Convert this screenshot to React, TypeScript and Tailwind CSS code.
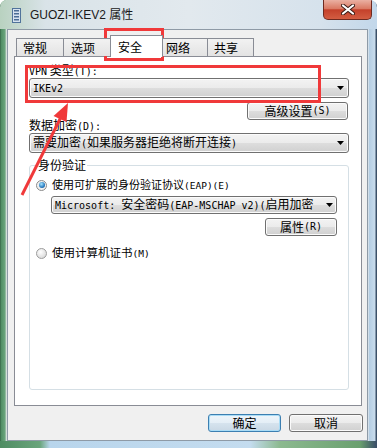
import React from "react";

const M = ({ children, small }: { children: React.ReactNode; small?: boolean }) => (
    <span className={`font-['DejaVu_Sans_Mono',monospace] ${small ? "text-[9.5px]" : "text-[10px]"}`}>{children}</span>
);

const DownArrow = ({ className = "" }: { className?: string }) => (
    <svg width="7" height="4" viewBox="0 0 7 4" className={className}>
        <polygon points="0,0 7,0 3.5,4" fill="#000" />
    </svg>
);

const grad =
    "bg-[linear-gradient(to_bottom,#f3f3f3_0%,#ebebeb_50%,#dddddd_51%,#d0d0d0_100%)] shadow-[inset_0_0_0_1px_#fbfbfb]";

function Combo({ className, children, arrowMr }: { className: string; children: React.ReactNode; arrowMr: string }) {
    return (
        <div className={`flex items-center rounded-[3px] border border-[#707070] ${grad} ${className}`}>
            <div className="flex-1 min-w-0 overflow-hidden whitespace-nowrap pl-[3px] leading-[16px]">{children}</div>
            <DownArrow className={`shrink-0 ${arrowMr}`} />
        </div>
    );
}

function Button({ className, children, primary }: { className: string; children: React.ReactNode; primary?: boolean }) {
    return (
        <div
            className={`flex items-center justify-center rounded-[3px] border leading-[14px] ${primary
                ? "border-[#3c7fb1] bg-[linear-gradient(to_bottom,#eef5fa_0%,#e4eef6_50%,#d6e3ee_51%,#c9d8e5_100%)] shadow-[inset_0_0_0_1px_#a9dcf6]"
                : `border-[#707070] ${grad}`
                } ${className}`}
        >
            {children}
        </div>
    );
}

function Radio({ checked }: { checked?: boolean }) {
    return checked ? (
        <div className="w-[11px] h-[11px] rounded-full border border-[#8a8a8a] bg-[radial-gradient(circle,#e4e4e4,#fafafa)] flex items-center justify-center">
            <div className="w-[6px] h-[6px] rounded-full bg-[radial-gradient(circle_at_40%_35%,#a6e4ff,#2a7cc0_60%,#0d4480)]" />
        </div>
    ) : (
        <div className="w-[11px] h-[11px] rounded-full border border-[#9c9c9c] bg-[radial-gradient(circle_at_40%_35%,#ffffff,#dedede_70%,#c6c6c6)]" />
    );
}

export default function App() {
    const tabs = [
        { label: "常规", w: "w-[48px]", pl: "pl-[6px]" },
        { label: "选项", w: "w-[48px] -ml-px", pl: "pl-[7px]" },
        { label: "安全", w: "w-[53px] -ml-px", pl: "pl-[7px]", active: true },
        { label: "网络", w: "w-[46px] -ml-px", pl: "pl-[3px]" },
        { label: "共享", w: "w-[47px] -ml-px", pl: "pl-[6px]" },
    ];

    return (
        <div className="w-[377px] h-[448px] relative overflow-hidden flex flex-col rounded-t-[7px] text-[12px] text-black font-['Noto_Sans_CJK_SC','Noto_Sans',sans-serif] bg-[linear-gradient(to_right,#2f5a3e_0px,#4f8d63_1px,#6aa57c_5px,#b7cfc2_6px,#f0f0f0_7px,#f0f0f0_368px,#b3cde3_369px,#c9dcec_375px,#3b5068_376px)]">

            {/* title bar */}
            <div className="h-[29px] shrink-0 flex items-start rounded-t-[7px] bg-[linear-gradient(to_right,#b9d2c0,#d9e3e8_12%,#e2e9ee_50%,#d6e2ec_85%,#c2d7ea)]">
                <svg width="9" height="15" viewBox="0 0 9 15" className="ml-[12px] mt-[8px]">
                    <rect x="0.5" y="0.5" width="8" height="14" fill="#d6e2ef" stroke="#51739b" />
                    <rect x="2" y="2" width="5" height="1.5" fill="#4a6d96" />
                    <rect x="2" y="5" width="5" height="1.5" fill="#4a6d96" />
                    <rect x="2" y="8" width="5" height="1.5" fill="#4a6d96" />
                    <rect x="2" y="11" width="5" height="1.5" fill="#4a6d96" />
                </svg>
                <span className="ml-[9px] mt-[7px] leading-[16px] font-['Liberation_Sans','Noto_Sans_CJK_SC',sans-serif] text-[12px] text-[#1a1a1a]">
                    GUOZI-IKEV2 属性
                </span>
                <div className="flex-1" />
                <div className="mr-[5px] w-[49px] h-[20px] flex items-center justify-center rounded-b-[5px] border border-t-0 border-[#6e2a20] bg-[linear-gradient(to_bottom,#eab0a2_0%,#da7a64_45%,#c4412b_52%,#d35d42_100%)]">
                    <svg width="14" height="11" viewBox="0 0 14 11">
                        <path d="M2 1.5 L12 9.5 M12 1.5 L2 9.5" stroke="#3a1a14" strokeWidth="4" strokeLinecap="round" />
                        <path d="M2 1.5 L12 9.5 M12 1.5 L2 9.5" stroke="#fff" strokeWidth="2.2" strokeLinecap="round" />
                    </svg>
                </div>
            </div>

            {/* client area */}
            <div className="ml-[7px] w-[361px] h-[412px] shrink-0 border border-[#8e9aa6] bg-[#f0f0f0] flex flex-col">

                <div className="mt-[5px] ml-[8px] flex items-end h-[22px] -mb-px relative z-10">
                    {tabs.map((t) => (
                        <div
                            key={t.label}
                            className={`${t.w} ${t.pl} flex items-center border border-b-0 border-[#898c95] leading-[14px] ${t.active
                                ? "h-[22px] bg-white relative z-10"
                                : "h-[18px] mb-px bg-[linear-gradient(to_bottom,#f2f2f2,#e3e3e3)]"
                                }`}
                        >
                            {t.label}
                        </div>
                    ))}
                </div>

                <div className="ml-[6px] w-[348px] h-[350px] border border-[#898c95] bg-white flex flex-col">
                    <div className="mt-[6px] ml-[14px] h-[14px] leading-[14px]">
                        <M>VPN</M> 类型<M>(T):</M>
                    </div>
                    <Combo className="mt-px ml-[14px] w-[320px] h-[20px]" arrowMr="mr-[4px]">
                        <M>IKEv2</M>
                    </Combo>
                    <Button className="mt-[4px] ml-[232px] w-[101px] h-[18px]">
                        高级设置<M>(S)</M>
                    </Button>
                    <div className="-mt-[2px] ml-[14px] h-[14px] leading-[14px]">
                        数据加密<M>(D):</M>
                    </div>
                    <Combo className="mt-px ml-[14px] w-[320px] h-[20px]" arrowMr="mr-[4px]">
                        需要加密<M>(</M>如果服务器拒绝将断开连接<M>)</M>
                    </Combo>

                    <div className="mt-[12px] ml-[14px] w-[320px] h-[225px] border border-[#d5dfe5] rounded-[3px] flex flex-col">
                        <div className="-mt-[8px] ml-[7px] w-fit px-px bg-white h-[14px] leading-[14px]">身份验证</div>
                        <div className="mt-[6px] ml-[6px] h-[14px] flex items-center gap-[5px] leading-[14px]">
                            <Radio checked />
                            <span className="text-[11px]">
                                使用可扩展的身份验证协议<M small>(EAP)(E)</M>
                            </span>
                        </div>
                        <Combo className="mt-[4px] ml-[21px] w-[286px] h-[18px]" arrowMr="mr-[3px]">
                            <M>Microsoft: </M>安全密码<M>(EAP-MSCHAP v2)(</M>启用加密
                        </Combo>
                        <Button className="mt-[4px] ml-[235px] w-[72px] h-[18px]">
                            属性<M>(R)</M>
                        </Button>
                        <div className="mt-[10px] ml-[6px] h-[14px] flex items-center gap-[5px] leading-[14px]">
                            <Radio />
                            <span className="text-[11.5px]">
                                使用计算机证书<M small>(M)</M>
                            </span>
                        </div>
                    </div>
                </div>

                <div className="mt-[8px] flex justify-end gap-[8px] pr-[4px]">
                    <Button primary className="w-[73px] h-[18px]">确定</Button>
                    <Button className="w-[74px] h-[18px]">取消</Button>
                </div>
            </div>

            {/* bottom frame */}
            <div className="flex-1 bg-[linear-gradient(to_right,#4f8d63_0px,#6aa57c_40px,#b8d5ec_50px,#c4dcef_250px,#8cb98f_280px,#6aa06f_360px,#3b5068_376px)]" />

            {/* annotations */}
            <div className="absolute left-[104px] top-[28px] w-[60px] h-[33px] border-[3px] border-[#f0393a] pointer-events-none" />
            <div className="absolute left-[25px] top-[65px] w-[296px] h-[38px] border-[3px] border-[#f0393a] pointer-events-none" />
            <svg className="absolute left-0 top-0 pointer-events-none" width="377" height="448">
                <line x1="22" y1="195" x2="61" y2="117" stroke="#f0393a" strokeWidth="3" />
                <polygon points="68,103 66.5,122 53.5,116" fill="#f0393a" />
            </svg>
        </div>
    );
}
